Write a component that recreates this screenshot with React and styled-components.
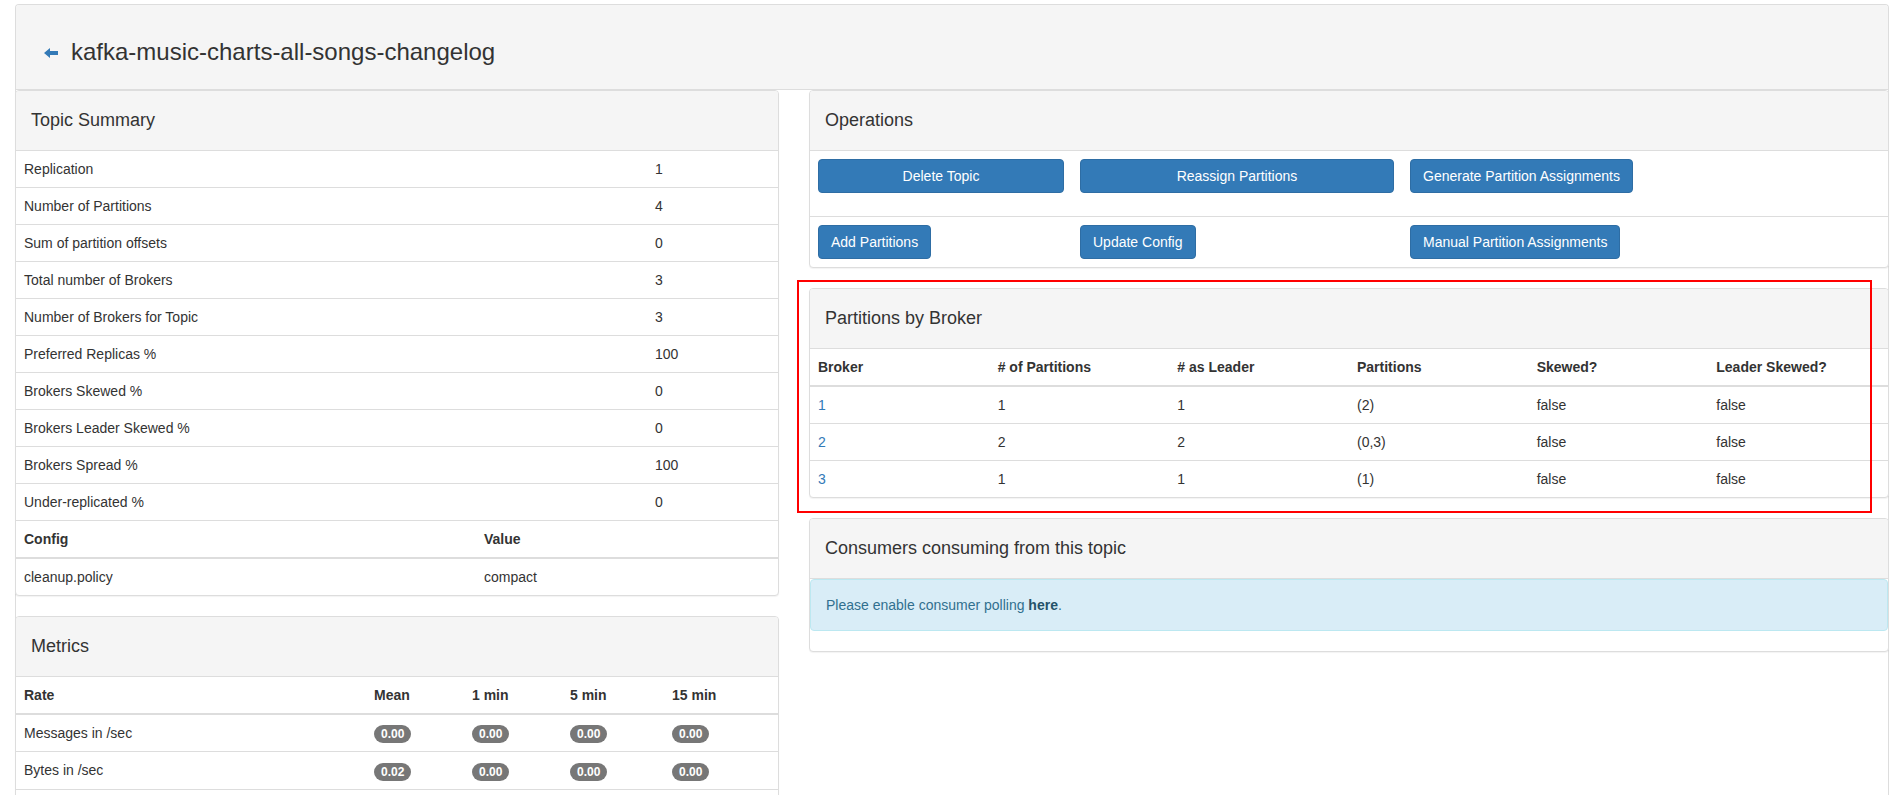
import React from 'react'
import styled, { createGlobalStyle } from 'styled-components'

const GlobalStyle = createGlobalStyle`
  body {
    margin: 0;
    background: #fff;
    color: #333;
    font-family: "Liberation Sans", Arial, Helvetica, sans-serif;
    font-size: 14px;
    line-height: 20px;
  }
  * { box-sizing: border-box; }
`

const summary = [
  ['Replication', '1'],
  ['Number of Partitions', '4'],
  ['Sum of partition offsets', '0'],
  ['Total number of Brokers', '3'],
  ['Number of Brokers for Topic', '3'],
  ['Preferred Replicas %', '100'],
  ['Brokers Skewed %', '0'],
  ['Brokers Leader Skewed %', '0'],
  ['Brokers Spread %', '100'],
  ['Under-replicated %', '0'],
]

// only the rows that fit in the window
const metrics = [
  ['Messages in /sec', ['0.00', '0.00', '0.00', '0.00']],
  ['Bytes in /sec', ['0.02', '0.00', '0.00', '0.00']],
]

const brokers = [
  ['1', '1', '1', '(2)', 'false', 'false'],
  ['2', '2', '2', '(0,3)', 'false', 'false'],
  ['3', '1', '1', '(1)', 'false', 'false'],
]

function BackArrow() {
  return (
    <svg width="14" height="10" viewBox="0 0 14 10">
      <path d="M0 5 L6 0 V3 H14 V7 H6 V10 Z" fill="#337ab7" />
    </svg>
  )
}

function App() {
  return (
    <Page>
      <GlobalStyle />
      <Frame>
        <TopBar>
          <BackLink href="#"><BackArrow /></BackLink>
          <Title>kafka-music-charts-all-songs-changelog</Title>
        </TopBar>

        <Columns>
          <LeftCol>
            <Panel>
              <PanelHeading>Topic Summary</PanelHeading>
              <DataTable>
                <colgroup>
                  <Col $w="631px" />
                  <Col />
                </colgroup>
                <tbody>
                  {summary.map(([label, value]) => (
                    <tr key={label}>
                      <td>{label}</td>
                      <td>{value}</td>
                    </tr>
                  ))}
                </tbody>
              </DataTable>
              <DataTable $ruledHead>
                <colgroup>
                  <Col $w="460px" />
                  <Col />
                </colgroup>
                <thead>
                  <tr>
                    <th>Config</th>
                    <th>Value</th>
                  </tr>
                </thead>
                <tbody>
                  <tr>
                    <td>cleanup.policy</td>
                    <td>compact</td>
                  </tr>
                </tbody>
              </DataTable>
            </Panel>

            <Panel $tail>
              <PanelHeading>Metrics</PanelHeading>
              <DataTable $open>
                <colgroup>
                  <Col $w="350px" />
                  <Col $w="98px" />
                  <Col $w="98px" />
                  <Col $w="102px" />
                  <Col />
                </colgroup>
                <thead>
                  <tr>
                    <th>Rate</th>
                    <th>Mean</th>
                    <th>1 min</th>
                    <th>5 min</th>
                    <th>15 min</th>
                  </tr>
                </thead>
                <tbody>
                  {metrics.map(([label, values]) => (
                    <tr key={label}>
                      <td>{label}</td>
                      {values.map((v, i) => (
                        <td key={i}><Badge>{v}</Badge></td>
                      ))}
                    </tr>
                  ))}
                </tbody>
              </DataTable>
            </Panel>
          </LeftCol>

          <RightCol>
            <Panel>
              <PanelHeading>Operations</PanelHeading>
              <OpsRow>
                <OpsCell $bottom="23px"><Button $block>Delete Topic</Button></OpsCell>
                <OpsCell $bottom="23px"><Button $block>Reassign Partitions</Button></OpsCell>
                <OpsCell $bottom="23px"><Button>Generate Partition Assignments</Button></OpsCell>
              </OpsRow>
              <OpsRow $ruled>
                <OpsCell><Button>Add Partitions</Button></OpsCell>
                <OpsCell><Button>Update Config</Button></OpsCell>
                <OpsCell><Button>Manual Partition Assignments</Button></OpsCell>
              </OpsRow>
            </Panel>

            <Highlighted>
              <Panel $flush>
                <PanelHeading>Partitions by Broker</PanelHeading>
                <DataTable>
                  <thead>
                    <tr>
                      <th>Broker</th>
                      <th># of Partitions</th>
                      <th># as Leader</th>
                      <th>Partitions</th>
                      <th>Skewed?</th>
                      <th>Leader Skewed?</th>
                    </tr>
                  </thead>
                  <tbody>
                    {brokers.map(([id, ...rest]) => (
                      <tr key={id}>
                        <td><TableLink href="#">{id}</TableLink></td>
                        {rest.map((v, i) => <td key={i}>{v}</td>)}
                      </tr>
                    ))}
                  </tbody>
                </DataTable>
              </Panel>
              <Annotation />
            </Highlighted>

            <Panel>
              <PanelHeading>Consumers consuming from this topic</PanelHeading>
              <InfoAlert>
                Please enable consumer polling <AlertLink href="#">here</AlertLink>.
              </InfoAlert>
            </Panel>
          </RightCol>
        </Columns>
      </Frame>
    </Page>
  )
}

export default App

const Page = styled.div`
  padding: 4px 11px 0 15px;
  height: 795px;
  overflow: hidden;
`

const Frame = styled.div`
  border: 1px solid #ddd;
  border-bottom: none;
  border-radius: 4px 4px 0 0;
  min-height: 900px;
`

const TopBar = styled.div`
  display: flex;
  align-items: center;
  gap: 13px;
  padding: 34px 15px 24px 28px;
  background: #f5f5f5;
  border-bottom: 1px solid #ddd;
  border-radius: 3px 3px 0 0;
`

const BackLink = styled.a`
  display: flex;
  align-items: center;
  margin-top: 1px;
`

const Title = styled.h3`
  margin: 0;
  font-size: 24px;
  line-height: 26px;
  font-weight: normal;
  color: #333;
`

const Columns = styled.div`
  display: flex;
  align-items: flex-start;
  gap: 30px;
  margin: 0 -1px;
`

const LeftCol = styled.div`
  width: 764px;
  flex-shrink: 0;
`

const RightCol = styled.div`
  flex: 1;
  min-width: 0;
`

const Panel = styled.div`
  background: #fff;
  border: 1px solid #ddd;
  border-radius: 4px;
  box-shadow: 0 1px 1px rgba(0,0,0,.05);
  margin-bottom: ${props => props.$flush ? '0' : '20px'};
  padding-bottom: ${props => props.$tail ? '60px' : '0'};
  overflow: hidden;
`

const PanelHeading = styled.div`
  padding: 19px 15px 20px;
  background: #f5f5f5;
  border-bottom: 1px solid #ddd;
  font-size: 18px;
  line-height: 20px;
  color: #333;
`

const Col = styled.col`
  width: ${props => props.$w || 'auto'};
`

const DataTable = styled.table`
  width: 100%;
  table-layout: fixed;
  border-collapse: separate;
  border-spacing: 0;

  th, td {
    padding: 8px;
    line-height: 20px;
    text-align: left;
    vertical-align: top;
    border-top: 1px solid #ddd;
  }

  th {
    font-weight: bold;
    border-bottom: 2px solid #ddd;
    border-top: ${props => props.$ruledHead ? '1px solid #ddd' : 'none'};
  }

  > tbody > tr:first-child > td {
    border-top: none;
  }

  > tbody > tr:last-child > td {
    border-bottom: ${props => props.$open ? '1px solid #ddd' : 'none'};
  }
`

const Badge = styled.span`
  display: inline-block;
  min-width: 10px;
  padding: 3px 7px;
  font-size: 12px;
  font-weight: bold;
  line-height: 1;
  color: #fff;
  text-align: center;
  white-space: nowrap;
  vertical-align: middle;
  background: #777;
  border-radius: 10px;
`

const OpsRow = styled.div`
  display: grid;
  grid-template-columns: 262px 330px 1fr;
  border-top: ${props => props.$ruled ? '1px solid #ddd' : 'none'};
`

const OpsCell = styled.div`
  padding: 8px 8px ${props => props.$bottom || '8px'};
`

const Button = styled.button`
  display: ${props => props.$block ? 'block' : 'inline-block'};
  width: ${props => props.$block ? '100%' : 'auto'};
  padding: 6px 12px;
  font-family: inherit;
  font-size: 14px;
  line-height: 20px;
  color: #fff;
  background: #337ab7;
  border: 1px solid #2e6da4;
  border-radius: 4px;
  cursor: pointer;
  white-space: nowrap;
`

const Highlighted = styled.div`
  position: relative;
  margin-bottom: 20px;
`

const Annotation = styled.div`
  position: absolute;
  top: -8px;
  left: -12px;
  right: 17px;
  bottom: -15px;
  border: 2px solid #f00;
  pointer-events: none;
`

const TableLink = styled.a`
  color: #337ab7;
  text-decoration: none;
`

const InfoAlert = styled.div`
  margin: 0 0 20px;
  padding: 15px;
  color: #31708f;
  background: #d9edf7;
  border: 1px solid #bce8f1;
  border-radius: 4px;
`

const AlertLink = styled.a`
  color: #245269;
  font-weight: bold;
  text-decoration: none;
`
